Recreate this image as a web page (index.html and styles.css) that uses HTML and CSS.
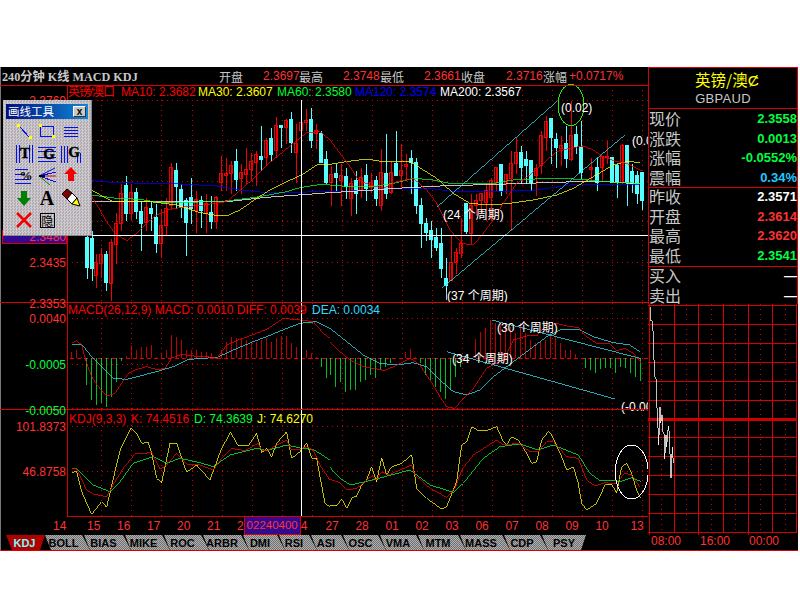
FILE: index.html
```html
<!DOCTYPE html>
<html lang="zh">
<head>
<meta charset="utf-8">
<title>英镑/澳 240分钟 K线</title>
<link rel="stylesheet" href="styles.css">
</head>
<body>
<div class="app">
  <div class="left">
    <div class="topbar">
      <b class="title">240分钟 K线 MACD KDJ</b>
      <span class="lb">开盘</span><span class="val">2.3697</span>
      <span class="lb">最高</span><span class="val">2.3748</span>
      <span class="lb">最低</span><span class="val">2.3661</span>
      <span class="lb">收盘</span><span class="val">2.3716</span>
      <span class="lb">涨幅</span><span class="val">+0.0717%</span>
    </div>

    <svg class="pane" width="648" height="218" viewBox="0 85 648 218">
      <path class="dot" d="M67 100.5H648M67 140.5H648M67 181.5H648M67 221.5H648M67 262.5H648"/>
      <path class="dot" d="M101.5 85V303M131.5 85V303M161.5 85V303M192.5 85V303M222.5 85V303M252.5 85V303M282.5 85V303M312.5 85V303M342.5 85V303M372.5 85V303M402.5 85V303M432.5 85V303M462.5 85V303M492.5 85V303M522.5 85V303M552.5 85V303M582.5 85V303M612.5 85V303M642.5 85V303"/>
      <rect class="cursor-box" x="2.5" y="230.5" width="64" height="13"/>
      <g class="wick-g" transform="translate(.5,.5)">
        <path class="red-c" d="M96 253V287M94 262H97V275H94ZM101 247V277M99 254H102V263H99ZM111 238V300M109 242H112V283H109ZM116 212V263M114 223H117V244H114ZM121 183V230M119 193H122V223H119ZM131 183V220M129 192H132V213H129ZM146 197V230M144 207H147V222H144ZM161 208V257M159 225H162V243H159ZM166 197V235M164 208H167V225H164ZM171 162V208M169 167H172V205H169ZM196 190V232M194 199H197V210H194ZM206 193V232M204 203H207V213H204ZM216 195V228M214 197H217V221H214ZM221 155V190M219 173H222V182H219ZM226 157V190M224 173H227V175H224ZM231 160V193M229 165H232V173H229ZM241 163V193M239 172H242V178H239ZM246 147V183M244 169H247V174H244ZM251 152V180M249 161H252V169H249ZM256 150V185M254 154H257V162H254ZM266 137V165M264 140H267V157H264ZM276 116V157M274 125H277V150H274ZM286 118V143M284 120H287V127H284ZM296 123V182M294 143H297V152H294ZM301 100V130M299 122H302V130H299ZM306 108V130M304 120H307V122H304ZM316 123V148M314 130H317V133H314ZM331 165V205M329 174H332V182H329ZM341 163V205M339 175H342V180H339ZM351 177V215M349 183H352V198H349ZM361 167V197M359 177H362V190H359ZM371 172V192M369 182H372V187H369ZM381 148V210M379 172H382V205H379ZM391 160V193M389 172H392V192H389ZM401 143V188M399 170H402V175H399ZM406 153V178M404 164H407V166H404ZM451 235V280M449 262H452V280H449ZM456 247V273M454 252H457V262H454ZM461 217V257M459 243H462V253H459ZM471 193V243M469 205H472V233H469ZM476 193V215M474 200H477V205H474ZM481 193V213M479 193H482V200H479ZM486 183V220M484 190H487V202H484ZM491 177V220M489 180H492V197H489ZM496 167V190M494 167H497V182H494ZM506 173V193M504 174H507V183H504ZM511 150V230M509 163H512V178H509ZM516 137V173M514 152H517V163H514ZM536 163V195M534 168H537V175H534ZM541 130V173M539 135H542V165H539ZM546 115V150M544 121H547V137H544ZM561 135V165M559 145H562V148H559ZM571 100V160M569 135H572V159H569ZM591 157V180M589 167H592V169H589ZM602 155V180M600 156H603V167H600ZM607 140V163M605 156H608V157H605ZM622 143V183M620 145H623V182H620Z"/>
        <path class="cy-c" d="M87 230V278M85 237H88V267H85ZM92 230V280M90 238H93V268H90ZM106 250V290M104 254H107V282H104ZM126 175V220M124 185H127V213H124ZM136 187V218M134 192H137V211H134ZM141 200V250M139 211H142V223H139ZM151 200V230M149 208H152V213H149ZM156 203V252M154 217H157V243H154ZM176 162V208M174 170H177V186H174ZM181 183V217M179 189H182V207H179ZM186 197V255M184 200H187V222H184ZM191 177V223M189 197H192V208H189ZM201 195V227M199 200H202V210H199ZM211 195V228M209 212H212V221H209ZM236 148V190M234 161H237V179H234ZM261 125V170M259 156H262V159H259ZM271 127V160M269 138H272V154H269ZM281 125V147M279 125H282V127H279ZM291 111V152M289 119H292V142H289ZM311 107V147M309 119H312V140H309ZM321 130V162M319 133H322V162H319ZM326 150V183M324 159H327V182H324ZM336 163V190M334 173H337V177H334ZM346 167V198M344 176H347V186H344ZM356 170V213M354 180H357V193H354ZM366 163V200M364 175H367V188H364ZM376 175V205M374 180H377V198H374ZM386 133V198M384 173H387V193H384ZM396 130V175M394 163H397V175H394ZM411 149V193M409 158H412V162H409ZM416 157V213M414 162H417V205H414ZM421 197V247M419 205H422V223H419ZM426 217V240M424 223H427V232H424ZM431 220V257M429 230H432V239H429ZM436 227V250M434 237H437V247H434ZM441 227V277M439 243H442V268H439ZM446 257V290M444 278H447V285H444ZM466 203V233M464 203H467V231H464ZM501 164V195M499 164H502V190H499ZM521 145V183M519 152H522V167H519ZM526 150V183M524 159H527V165H524ZM531 160V190M529 160H532V182H529ZM551 118V163M549 118H552V137H549ZM556 132V167M554 139H557V147H554ZM566 125V167M564 143H567V158H564ZM576 125V153M574 134H577V146H574ZM581 120V178M579 147H582V172H579ZM597 157V190M595 167H598V182H595ZM612 157V182M610 157H613V182H610ZM617 163V197M615 165H618V182H615ZM627 145V205M625 145H628V182H625ZM632 163V192M630 171H633V183H630ZM637 170V203M635 175H638V193H635ZM642 172V209M640 172H643V200H640Z"/>
      </g>
      <g transform="translate(0,50) scale(.3333)">
        <polyline class="ln l-blue" points="275,392 350,398 540,402 650,408 720,420 800,428 990,425"/>
        <polyline class="ln l-white" points="275,455 680,455 800,442 990,428"/>
        <polyline class="ln l-green" points="275,435 350,445 420,448 480,458 660,455 720,448 780,440 860,425 900,413 950,405 990,402"/>
        <polyline class="ln l-yellow" points="275,420 310,440 340,455 450,455 530,465 590,485 640,495 680,498 720,480 770,445 810,420 860,395 905,375 950,345 990,345"/>
        <polyline class="ln l-red" points="275,440 300,480 320,515 345,550 380,572 410,550 440,520 470,495 510,478 560,470 610,465 680,455 710,430 750,395 800,345 850,305 880,280 920,248 960,245 990,270"/>
      </g>
      <g transform="translate(330,50) scale(.3333)">
        <polyline class="ln l-blue" points="0,425 100,422 200,415 300,415 370,425 500,425 620,420 720,405 830,405 930,402"/>
        <polyline class="ln l-white" points="0,428 100,422 200,415 330,408 500,403 680,397 800,393 930,402"/>
        <polyline class="ln l-green" points="0,405 60,410 130,410 190,400 250,385 310,390 360,400 480,402 550,390 660,385 760,388 820,395 930,400"/>
        <polyline class="ln l-yellow" points="0,343 50,335 110,327 160,335 240,335 280,360 320,385 370,430 420,460 480,465 540,460 610,450 680,435 730,415 790,380 850,345 890,335 930,337"/>
        <polyline class="ln l-red" points="0,270 30,310 60,350 85,390 120,405 160,415 200,395 250,385 290,420 320,460 360,540 395,580 430,585 460,550 490,510 520,460 560,400 600,375 640,340 680,305 720,295 760,288 790,300 820,320 860,335 890,340 935,362"/>
        <polyline class="ln l-cyan" points="320,472 680,155"/>
        <polyline class="ln l-cyan" points="335,715 885,255"/>
        <polyline class="ln l-white" points="350,715 350,750"/>
      </g>
      <path class="solid-w" d="M67 235.5H648M301.5 100V303"/>
      <ellipse class="ell-g" cx="571" cy="105" rx="13" ry="20.5"/>
      <text class="tx w" x="561" y="112">(0.02)</text>
      <text class="tx w" x="632" y="145">(0.0</text>
      <text class="tx w" x="443" y="219">(24 个周期)</text>
      <text class="tx w" x="447" y="300">(37 个周期)</text>
      <path class="frame" d="M0 85.5H648M67.5 85V303M0 302.5H648"/>
      <text class="tx r" x="68" y="96" textLength="47" lengthAdjust="spacing">英镑/澳口</text>
      <text class="tx r" x="121" y="96">MA10: 2.3682</text>
      <text class="tx y" x="198" y="96">MA30: 2.3607</text>
      <text class="tx g" x="277" y="96">MA60: 2.3580</text>
      <text class="tx b" x="355" y="96">MA120: 2.3574</text>
      <text class="tx w" x="440" y="96">MA200: 2.3567</text>
      <text class="tx ax" x="66" y="105" text-anchor="end">2.3760</text>
      <text class="tx ax" x="66" y="241" text-anchor="end">2.3480</text>
      <text class="tx ax" x="66" y="267" text-anchor="end">2.3435</text>
      <text class="tx ax" x="66" y="308" text-anchor="end">2.3353</text>
    </svg>

    <svg class="pane" width="648" height="107" viewBox="0 303 648 107">
      <path class="dot" d="M67 318.5H648M67 364.5H220M67 408.5H648M101.5 303V410M131.5 303V410M161.5 303V410M192.5 303V410M222.5 303V410M252.5 303V410M282.5 303V410M312.5 303V410M342.5 303V410M372.5 303V410M402.5 303V410M432.5 303V410M462.5 303V410M492.5 303V410M522.5 303V410M552.5 303V410M582.5 303V410M612.5 303V410M642.5 303V410"/>
      <path class="zero" d="M70 358.5H648"/>
      <g transform="translate(0,300) scale(.3333)">
        <path class="ln l-red" d="M215 175V155M230 175V150M245 175V172M380 175V168M395 175V135M410 175V150M425 175V140M440 175V140M455 175V135M470 175V170M485 175V160M500 175V150M515 175V105M530 175V110M545 175V120M560 175V150M575 175V150M590 175V150M605 175V155M620 175V155M635 175V160M650 175V170M665 175V150M680 175V125M695 175V110M710 175V115M725 175V115M740 175V120M755 175V125M770 175V125M785 175V120M800 175V115M815 175V125M830 175V115M845 175V108M860 175V108M875 175V130M890 175V140M905 175V140M920 175V150M935 175V160M950 175V170"/>
        <path class="ln l-green" d="M260 175V255M275 175V300M290 175V315M305 175V310M320 175V320M335 175V290M350 175V245M365 175V182M965 175V200M980 175V235"/>
        <polyline class="ln l-cyan" points="215,133 245,133 275,170 310,205 340,235 380,238 420,228 480,212 520,200 560,180 600,175 650,173 700,150 760,125 800,110 860,85 900,70 950,65 990,85"/>
        <polyline class="ln l-red" points="215,130 230,122 245,135 260,190 275,230 295,260 320,288 345,280 365,250 385,220 405,210 440,200 475,210 495,205 515,175 545,163 580,168 620,170 650,175 680,135 710,122 770,100 800,88 850,55 900,60 940,65 970,100 990,115"/>
      </g>
      <g transform="translate(330,300) scale(.3333)">
        <path class="ln l-red" d="M228 175V155M243 175V147M258 175V170M438 175V118M453 175V97M468 175V85M483 175V60M498 175V70M513 175V65M528 175V70M543 175V80M558 175V100M573 175V70M588 175V100M603 175V120M618 175V130M633 175V125M648 175V120M663 175V100M678 175V110M693 175V130M708 175V150M723 175V150M738 175V162"/>
        <path class="ln l-green" d="M3 175V225M18 175V262M33 175V245M48 175V275M63 175V270M78 175V270M93 175V245M108 175V240M123 175V225M138 175V235M153 175V210M168 175V200M183 175V190M273 175V190M288 175V225M303 175V240M318 175V260M333 175V275M348 175V298M363 175V270M378 175V230M393 175V200M768 175V205M783 175V210M798 175V218M813 175V208M828 175V205M843 175V205M858 175V218M873 175V200M888 175V205M903 175V218M918 175V230M933 175V242"/>
        <polyline class="ln l-cyan" points="0,85 50,125 100,165 150,190 200,195 250,188 290,200 330,240 370,275 410,285 450,270 490,230 530,200 570,170 610,140 650,110 690,90 745,88 790,110 850,128 900,135 930,155"/>
        <polyline class="ln l-red" points="0,125 30,155 60,180 100,200 130,205 165,212 200,195 240,175 270,195 300,240 330,290 350,320 375,325 395,300 430,265 470,205 520,180 550,120 590,108 620,108 640,85 680,70 720,80 745,82 770,110 800,130 840,132 860,152 885,145 910,160 935,190"/>
        <polyline class="ln l-cyan" points="485,60 930,175"/>
        <polyline class="ln l-cyan" points="350,155 855,297"/>
      </g>
      <path class="solid-w" d="M301.5 303V410"/>
      <text class="tx w" x="497" y="332">(30 个周期)</text>
      <text class="tx w" x="452" y="363">(34 个周期)</text>
      <text class="tx w" x="621" y="411">(-0.00</text>
      <path class="frame" d="M67.5 303V410M0 409.5H648"/>
      <text class="tx r" x="68" y="314">MACD(26,12,9) MACD: 0.0010 DIFF: 0.0039</text>
      <text class="tx c" x="312" y="314">DEA: 0.0034</text>
      <text class="tx ax" x="66" y="323" text-anchor="end">0.0040</text>
      <text class="tx gx" x="66" y="369" text-anchor="end">-0.0005</text>
      <text class="tx gx" x="66" y="415" text-anchor="end">-0.0050</text>
    </svg>

    <svg class="pane" width="648" height="107" viewBox="0 410 648 107">
      <path class="dot" d="M67 426.5H648M67 471.5H648M101.5 410V517M131.5 410V517M161.5 410V517M192.5 410V517M222.5 410V517M252.5 410V517M282.5 410V517M312.5 410V517M342.5 410V517M372.5 410V517M402.5 410V517M432.5 410V517M462.5 410V517M492.5 410V517M522.5 410V517M552.5 410V517M582.5 410V517M612.5 410V517M642.5 410V517"/>
      <g transform="translate(0,410) scale(.3333)">
        <polyline class="ln l-yellow" points="215,187 230,185 245,245 275,313 305,275 320,292 340,205 362,115 393,55 410,70 425,100 445,97 455,130 470,205 485,218 510,100 530,100 560,187 590,165 630,210 665,115 692,67 715,108 745,108 770,70 785,128 800,115 815,140 830,100 860,65 875,145 900,125 920,100 935,145 950,145 975,280 990,290"/>
        <polyline class="ln l-green" points="215,175 230,175 280,225 330,245 360,215 400,160 460,140 500,160 540,145 600,158 640,170 690,135 770,115 800,122 860,105 905,115 940,118 990,150"/>
        <polyline class="ln l-red" points="215,175 230,177 260,240 280,252 320,260 345,215 370,175 405,132 455,128 480,178 500,165 530,130 560,162 600,165 640,180 665,145 695,115 735,122 775,100 785,120 800,122 860,90 875,120 900,118 920,110 940,120 960,165 990,210"/>
      </g>
      <g transform="translate(330,410) scale(.3333)">
        <polyline class="ln l-yellow" points="0,287 20,287 35,267 50,295 65,265 80,258 95,225 110,210 125,170 140,215 155,143 170,195 185,170 215,160 245,135 260,235 290,265 335,297 350,290 380,215 395,105 410,95 425,50 445,62 475,60 500,50 520,95 530,105 545,80 565,90 590,130 605,160 620,155 635,90 655,65 665,75 695,140 710,180 730,170 745,220 755,280 770,300 800,280 825,225 845,222 860,250 875,170 890,160 905,190 920,240 932,265"/>
        <polyline class="ln l-green" points="0,172 30,205 60,225 120,212 240,180 300,225 370,247 400,220 460,145 510,110 570,102 625,120 670,105 745,135 780,190 810,212 850,212 870,215 905,203 932,214"/>
        <polyline class="ln l-red" points="0,208 30,218 50,240 80,235 100,220 125,198 140,210 155,185 175,195 245,165 255,195 300,235 350,262 375,235 395,180 430,135 500,90 520,105 565,100 600,125 625,125 650,95 670,95 710,140 745,145 770,210 795,228 825,218 855,222 885,190 905,195 930,232"/>
      </g>
      <path class="solid-w" d="M301.5 410V517"/>
      <ellipse class="ell-w" cx="631.7" cy="472" rx="16.5" ry="27"/>
      <path class="frame" d="M67.5 410V517M67 516.5H648"/>
      <text class="tx r" x="69" y="423">KDJ(9,3,3)</text>
      <text class="tx r" x="131" y="423">K: 74.4516</text>
      <text class="tx g" x="194" y="423">D: 74.3639</text>
      <text class="tx y" x="257" y="423">J: 74.6270</text>
      <text class="tx ax" x="66" y="431" text-anchor="end">101.8373</text>
      <text class="tx ax" x="66" y="476" text-anchor="end">46.8758</text>
    </svg>

    <div class="dates">
      <span class="d d14">14</span><span class="d">15</span><span class="d">16</span><span class="d">17</span><span class="d">20</span><span class="d">21</span>
      <span class="d dn">2</span><span class="d-box">02240400</span><span class="d dn">4</span>
      <span class="d d27">27</span><span class="d">28</span><span class="d">01</span><span class="d">02</span><span class="d">03</span><span class="d">06</span><span class="d">07</span><span class="d">08</span><span class="d">09</span><span class="d">10</span><span class="d d13">13</span>
    </div>

    <div class="tabs">
      <span class="tab on tw39">KDJ</span>
      <span class="tab tw39">BOLL</span>
      <span class="tab tw41">BIAS</span>
      <span class="tab tw39">MIKE</span>
      <span class="tab tw39">ROC</span>
      <span class="tab tw40">ARBR</span>
      <span class="tab tw36">DMI</span>
      <span class="tab tw32">RSI</span>
      <span class="tab tw32">ASI</span>
      <span class="tab tw37">OSC</span>
      <span class="tab tw38">VMA</span>
      <span class="tab tw42">MTM</span>
      <span class="tab tw44">MASS</span>
      <span class="tab tw38">CDP</span>
      <span class="tab tw38 last">PSY</span>
    </div>
  </div>

  <aside class="side">
    <div class="name">
      <div class="name-cn">英镑/澳Ȼ</div>
      <div class="name-en">GBPAUD</div>
    </div>
    <div class="group g1">
      <div class="row"><span>现价</span><b class="v-g">2.3558</b></div>
      <div class="row"><span>涨跌</span><b class="v-g">0.0013</b></div>
      <div class="row"><span>涨幅</span><b class="v-g">-0.0552%</b></div>
      <div class="row"><span>震幅</span><b class="v-c">0.34%</b></div>
    </div>
    <div class="group g1 lift">
      <div class="row"><span>昨收</span><b class="v-w">2.3571</b></div>
      <div class="row"><span>开盘</span><b class="v-r">2.3614</b></div>
      <div class="row"><span>最高</span><b class="v-r">2.3620</b></div>
      <div class="row"><span>最低</span><b class="v-g">2.3541</b></div>
    </div>
    <div class="group g2 lift">
      <div class="row"><span>买入</span><b class="v-w">—</b></div>
      <div class="row"><span>卖出</span><b class="v-w">—</b></div>
    </div>
    <svg class="mini" width="150" height="231" viewBox="648 304 150 231">
      <path class="dot" d="M661.5 304V533M686.5 304V533M711.5 304V533M735.5 304V533M760.5 304V533M785.5 304V533"/>
      <path class="mini-grid" d="M648 305.5H797M648 324.5H797M648 343.5H797M648 362.5H797M648 381.5H797M648 400.5H797M648 437.5H797M648 456.5H797M648 475.5H797M648 494.5H797M648 513.5H797M648 532.5H797M649.5 304V535M674.5 304V533M698.5 304V535M723.5 304V533M748.5 304V535M772.5 304V533M796.5 304V533"/>
      <path class="mini-mid" d="M648 419H797"/>
      <g transform="translate(640,300) scale(.3333)">
        <polyline class="ln l-white" points="32,20 30,60 38,65 40,120 42,180 45,230 50,240 48,300 52,330 56,435 60,320 62,370 66,345 68,395 72,400 74,478 78,405 80,440 85,378 88,400 90,460 93,535 97,440 100,490"/>
      </g>
    </svg>
    <div class="times"><span>08:00</span><span>16:00</span><span>00:00</span></div>
  </aside>

  <div class="toolbar">
    <div class="tool-title"><span>画线工具</span><span class="tool-x">x</span></div>
    <div class="tools">
      <svg class="ic" viewBox="0 0 22 22"><path class="i-bl" d="M6 5L17 17"/><path class="i-yl" d="M4 3h3v3H4zM16 15h3v3h-3z"/></svg>
      <svg class="ic" viewBox="0 0 22 22"><path class="i-bl" d="M4.500 5.500H17.500V15.500H4.500Z"/><path class="i-yl" d="M3 3h3v3H3zM16 14h3v3h-3z"/></svg>
      <svg class="ic" viewBox="0 0 22 22"><path class="i-bl" d="M4 6.500H18M4 9.500H18M4 12.500H18M4 15.500H18"/></svg>

      <svg class="ic" viewBox="0 0 22 22"><path class="i-bl" d="M3.500 2V20M6.500 2V20M16.500 2V20M19.500 2V20"/><text class="i-t" x="12" y="15" text-anchor="middle">T</text></svg>
      <svg class="ic" viewBox="0 0 22 22"><path class="i-bl" d="M2 4.500H20M2 8.500H20M2 14.500H20M2 18.500H20"/><text class="i-t" x="13" y="16" text-anchor="middle">G</text></svg>
      <svg class="ic" viewBox="0 0 22 22"><path class="i-bl" d="M1.500 3V20M4.500 3V20M7.500 3V20M17.500 10V20M20.500 10V20"/><text class="i-t" x="14" y="14" text-anchor="middle">G</text></svg>

      <svg class="ic" viewBox="0 0 22 22"><path class="i-bl" d="M2 4.500H15M2 9.500H12M2 14.500H15M2 18.500H18"/><text class="i-p" x="13" y="15" text-anchor="middle">%</text></svg>
      <svg class="ic" viewBox="0 0 22 22"><path class="i-n" d="M3 11L19 3"/><path class="i-bl" d="M3 11L20 7M3 11L20 17"/><path class="i-rd" d="M3 11H20"/><path class="i-gr" d="M3 11L14 20"/><path class="i-bk" d="M3 11H9"/></svg>
      <svg class="ic" viewBox="0 0 22 22"><path class="i-fr" d="M11 2L17 9H14V16H8V9H4Z"/></svg>

      <svg class="ic" viewBox="0 0 22 22"><path class="i-fg" d="M8 4H14V11H18L11 19L4 11H8Z"/></svg>
      <svg class="ic" viewBox="0 0 22 22"><text class="i-a" x="11" y="18" text-anchor="middle">A</text></svg>
      <svg class="ic" viewBox="0 0 22 22"><path class="i-dk" d="M2 7L7 2L12 6L7 12Z"/><path class="i-wh" d="M7 12L12 6L17 11L12 17Z"/><path class="i-yf" d="M12 17L17 11L20 19Z"/></svg>

      <svg class="ic" viewBox="0 0 22 22"><path class="i-x" d="M4 4L18 18M18 4L4 18"/></svg>
      <div class="ic-hide"><span>隐</span></div>
    </div>
  </div>
</div>
</body>
</html>
```
FILE: styles.css
```css
* { box-sizing: border-box; }
html, body { margin: 0; padding: 0; background: #fff; }
body { width: 800px; height: 600px; overflow: hidden; font-family: "Liberation Sans", "Noto Sans CJK SC", sans-serif; }

.app {
  position: relative;
  display: flex;
  width: 798px;
  height: 484px;
  margin-top: 67px;
  background: #000;
  border-left: 1px solid #777;
  border-bottom: 1px solid #d80000;
}
.left { display: flex; flex-direction: column; width: 648px; margin-left: -1px; flex: none; }

/* top bar */
.topbar {
  display: grid;
  grid-template-columns: 217px 44px 36px 44px 37px 44px 37px 45px 37px 26px auto;
  align-items: center;
  height: 18px;
  padding-left: 2px;
  color: #c8c8c8;
  font-size: 12px;
}
.title { font: bold 12.200px "Liberation Serif", "Noto Sans CJK SC", serif; white-space: nowrap; }
.lb { font-family: "Noto Sans CJK SC", sans-serif; font-size: 12px; white-space: nowrap; }
.val { color: #ff3232; white-space: nowrap; }

/* chart panes */
.pane { display: block; flex: none; overflow: visible; }
.dot { fill: none; stroke: #d00000; stroke-dasharray: 1 4; shape-rendering: crispEdges; }
.zero { fill: none; stroke: #e00000; stroke-dasharray: 4 3; shape-rendering: crispEdges; }
.frame { fill: none; stroke: #d80000; shape-rendering: crispEdges; }
.cursor-box { fill: #300a90; stroke: #d80000; shape-rendering: crispEdges; }
.solid-w { fill: none; stroke: #fff; shape-rendering: crispEdges; }
.red-c { fill: #000; stroke: #f00000; shape-rendering: crispEdges; }
.cy-c { fill: #55ffff; stroke: #55ffff; shape-rendering: crispEdges; }
.ln { fill: none; stroke-width: .75px; vector-effect: non-scaling-stroke; shape-rendering: crispEdges; }
.l-red { stroke: #ff0000; }
.l-yellow { stroke: #ffff00; }
.l-green { stroke: #00ff30; }
.l-blue { stroke: #0000ff; }
.l-white { stroke: #fff; }
.l-cyan { stroke: #38dcf0; }
.ell-g { fill: none; stroke: #20f000; shape-rendering: crispEdges; }
.ell-w { fill: none; stroke: #fff; shape-rendering: crispEdges; }

.tx { font-family: "Liberation Sans", "Noto Sans CJK SC", sans-serif; font-size: 12px; }
.tx.r { fill: #ff0000; }
.tx.y { fill: #ffff00; }
.tx.g { fill: #00ff30; }
.tx.b { fill: #0000ff; }
.tx.w { fill: #fff; }
.tx.c { fill: #30d8ff; }
.tx.ax { fill: #ff3232; }
.tx.gx { fill: #00ff40; }

/* date axis */
.dates {
  display: flex;
  align-items: center;
  height: 18px;
  padding-left: 53px;
  color: #ff3232;
  font-size: 12px;
  white-space: nowrap;
}
.d { width: 30px; flex: none; }
.d14 { width: 34px; }
.dn { width: auto; }
.d-box {
  flex: none;
  width: 57px;
  height: 18px;
  line-height: 17px;
  text-align: center;
  background: #300a90;
  border: 1px solid #d80000;
  border-top: 0;
  font-size: 11.500px;
}
.d27 { margin-left: 18px; }
.d13 { width: 20px; margin-left: 5px; }

/* tabs */
.tabs { display: flex; height: 15px; padding-left: 6px; }
.tab {
  flex: none;
  display: flex;
  align-items: center;
  justify-content: center;
  margin-right: -6px;
  padding-right: 8px;
  background: repeating-conic-gradient(#b0b0b0 0 25%, #707070 0 50%) 0 0 / 2px 2px;
  clip-path: polygon(0 0, calc(100% - 8px) 0, 100% 100%, 6px 100%);
  color: #000;
  font: bold 11px "Liberation Sans", sans-serif;
}
.tab.on {
  background: #b00000;
  color: #70ffff;
  clip-path: polygon(0 0, calc(100% - 6px) 0, calc(100% - 11px) 100%, 6px 100%);
}
.tab.last { clip-path: polygon(0 0, 100% 0, calc(100% - 5px) 100%, 6px 100%); margin-right: 0; padding-right: 0; }
.tw32 { width: 38px; }
.tw36 { width: 42px; }
.tw37 { width: 43px; }
.tw38 { width: 44px; }
.tw39 { width: 45px; }
.tw40 { width: 46px; }
.tw41 { width: 47px; }
.tw42 { width: 48px; }
.tw44 { width: 50px; }

/* side panel */
.side {
  position: relative;
  display: flex;
  flex-direction: column;
  width: 150px;
  flex: none;
  background: #000;
  border-top: 1px solid #d80000;
}
.name { height: 40px; padding-left: 8px; border-left: 1px solid #d80000; border-right: 1px solid #d80000; text-align: center; }
.name-cn { height: 23px; line-height: 22px; color: #ffff00; font-size: 15.500px; font-family: "Noto Sans CJK SC", sans-serif; }
.name-en { color: #c8c8c8; font-size: 13px; line-height: 15px; letter-spacing: .3px; margin-left: -8px; }
.group { border: 1px solid #d80000; border-bottom: 0; padding: 0; color: #c8c8c8; }
.g1 { height: 79px; }
.g2 { height: 38px; }
.lift .row:first-child { margin-top: -1px; }
.row { display: flex; justify-content: space-between; align-items: center; height: 19.500px; font-size: 16px; line-height: 19px; font-family: "Noto Sans CJK SC", sans-serif; }
.row b { font: bold 13px "Liberation Sans", sans-serif; }
.v-g { color: #00ff40; }
.v-c { color: #20c8ff; }
.v-w { color: #fff; }
.v-r { color: #ff3232; }

.mini { display: block; flex: none; }
.mini-grid { fill: none; stroke: #d80000; shape-rendering: crispEdges; }
.mini-mid { fill: none; stroke: #d00000; stroke-width: 3; shape-rendering: crispEdges; }
.times { display: flex; height: 15px; padding: 0 0 0 3px; color: #ff3232; font-size: 12px; line-height: 13px; }
.times span { width: 49.500px; }

/* floating drawing toolbar */
.toolbar {
  position: absolute;
  left: 2px;
  top: 33px;
  width: 89px;
  height: 136px;
  padding: 4px 3px 0;
  background: #c4c0c4 repeating-conic-gradient(#cccccc 0 25%, #b4a8b4 0 50%) 0 0 / 3px 3px;
  border-right: 1px solid #888;
  border-bottom: 1px solid #888;
}
.tool-title {
  display: flex;
  align-items: center;
  justify-content: space-between;
  height: 15px;
  padding: 0 2px;
  background: linear-gradient(90deg, #00107c, #1088d8);
  color: #fff;
  font: 11.500px/15px "Noto Sans CJK SC", sans-serif;
  white-space: nowrap;
}
.tool-x {
  display: flex;
  align-items: center;
  justify-content: center;
  width: 13px;
  height: 11px;
  background: #c8c8c8;
  border: 1px solid #333;
  border-top-color: #fff;
  border-left-color: #fff;
  color: #000;
  font: bold 10px/9px "Liberation Sans", sans-serif;
}
.tools {
  display: grid;
  grid-template-columns: repeat(3, 23.500px);
  grid-auto-rows: 22px;
  justify-items: center;
  align-items: center;
  margin: 2px 0 0 6px;
}
.ic { display: block; width: 22px; height: 22px; }
.i-bl { fill: none; stroke: #0010f0; shape-rendering: crispEdges; }
.i-yl { fill: #ffff00; shape-rendering: crispEdges; }
.i-t { font: bold 15px "Liberation Serif", serif; fill: #000; stroke: #000; stroke-width: .4px; }
.i-p { font: bold 13px "Liberation Serif", serif; fill: #000; }
.i-n { fill: none; stroke: #0010f0; }
.i-rd { fill: none; stroke: #e00000; }
.i-gr { fill: none; stroke: #108000; }
.i-bk { fill: none; stroke: #000; stroke-width: 2; }
.i-fr { fill: #f00000; }
.i-fg { fill: #008000; }
.i-a { font: bold 20px "Liberation Serif", serif; fill: #000; }
.i-dk { fill: #800000; stroke: #000; }
.i-wh { fill: #fff; stroke: #000; }
.i-yf { fill: #ffff00; stroke: #000; }
.i-x { fill: none; stroke: #f00000; stroke-width: 2.500px; }
.ic-hide {
  display: flex;
  align-items: center;
  justify-content: center;
  width: 15px;
  height: 15px;
  border: 1px solid #000;
  color: #000;
  font: 12px/13px "Noto Sans CJK SC", sans-serif;
}
```
